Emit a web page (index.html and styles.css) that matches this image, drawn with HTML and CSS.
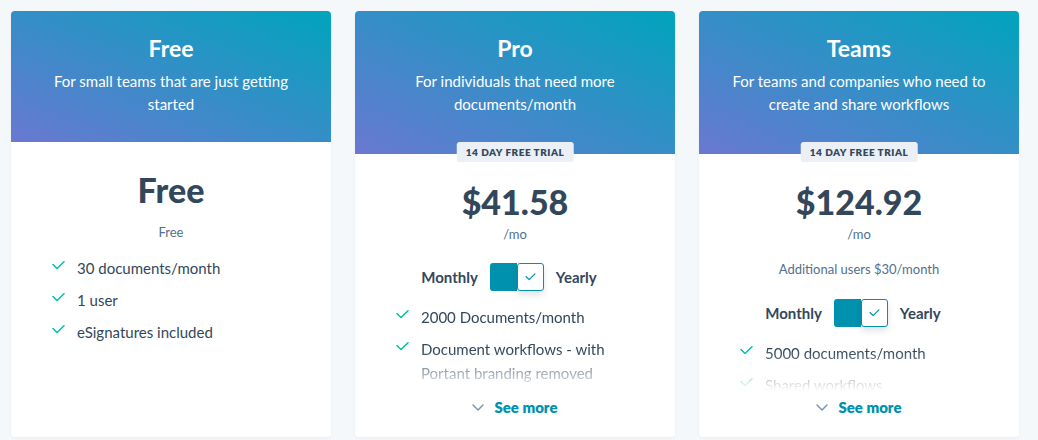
FILE: index.html
```html
<!DOCTYPE html>
<html lang="en">
<head>
<meta charset="utf-8">
<title>Pricing</title>
<link rel="stylesheet" href="styles.css">
</head>
<body>
<div class="plans">
  <div class="card card-free">
    <div class="card-head">
      <h2 class="plan-name">Free</h2>
      <p class="plan-desc">For small teams that are just getting started</p>
    </div>
    <div class="card-body">
      <div class="price">Free</div>
      <div class="price-sub">Free</div>
      <ul class="features">
        <li class="feature"><svg class="check" viewBox="0 0 13 9"><polyline points="1,3.5 5,7.5 12,0.8"/></svg><span>30 documents/month</span></li>
        <li class="feature"><svg class="check" viewBox="0 0 13 9"><polyline points="1,3.5 5,7.5 12,0.8"/></svg><span>1 user</span></li>
        <li class="feature"><svg class="check" viewBox="0 0 13 9"><polyline points="1,3.5 5,7.5 12,0.8"/></svg><span>eSignatures included</span></li>
      </ul>
    </div>
  </div>

  <div class="card">
    <div class="card-head has-badge">
      <h2 class="plan-name">Pro</h2>
      <p class="plan-desc">For individuals that need more documents/month</p>
      <span class="badge">14 DAY FREE TRIAL</span>
    </div>
    <div class="card-body">
      <div class="price">$41.58</div>
      <div class="price-sub">/mo</div>
      <div class="billing">
        <span class="billing-label">Monthly</span>
        <span class="toggle"><span class="toggle-fill"></span><span class="toggle-knob"><svg viewBox="0 0 12 9"><polyline points="1,4 4.5,7.5 11,1"/></svg></span></span>
        <span class="billing-label">Yearly</span>
      </div>
      <ul class="features faded">
        <li class="feature"><svg class="check" viewBox="0 0 13 9"><polyline points="1,3.5 5,7.5 12,0.8"/></svg><span>2000 Documents/month</span></li>
        <li class="feature"><svg class="check" viewBox="0 0 13 9"><polyline points="1,3.5 5,7.5 12,0.8"/></svg><span>Document workflows - with Portant branding removed</span></li>
      </ul>
      <div class="see-more"><svg class="chevron" viewBox="0 0 12 7"><polyline points="1,1 6,6 11,1"/></svg><span>See more</span></div>
    </div>
  </div>

  <div class="card">
    <div class="card-head has-badge">
      <h2 class="plan-name">Teams</h2>
      <p class="plan-desc">For teams and companies who need to create and share workflows</p>
      <span class="badge">14 DAY FREE TRIAL</span>
    </div>
    <div class="card-body">
      <div class="price">$124.92</div>
      <div class="price-sub">/mo</div>
      <div class="extra">Additional users $30/month</div>
      <div class="billing">
        <span class="billing-label">Monthly</span>
        <span class="toggle"><span class="toggle-fill"></span><span class="toggle-knob"><svg viewBox="0 0 12 9"><polyline points="1,4 4.5,7.5 11,1"/></svg></span></span>
        <span class="billing-label">Yearly</span>
      </div>
      <ul class="features faded">
        <li class="feature"><svg class="check" viewBox="0 0 13 9"><polyline points="1,3.5 5,7.5 12,0.8"/></svg><span>5000 documents/month</span></li>
        <li class="feature"><svg class="check" viewBox="0 0 13 9"><polyline points="1,3.5 5,7.5 12,0.8"/></svg><span>Shared workflows</span></li>
      </ul>
      <div class="see-more"><svg class="chevron" viewBox="0 0 12 7"><polyline points="1,1 6,6 11,1"/></svg><span>See more</span></div>
    </div>
  </div>
</div>
</body>
</html>
```

FILE: styles.css
```css
* { box-sizing: border-box; }

html, body {
  margin: 0;
  padding: 0;
  background: #f5f8fa;
  font-family: "Lato", "Noto Sans", sans-serif;
  color: #33475b;
}

.plans {
  display: grid;
  grid-template-columns: repeat(3, 320px);
  gap: 24px;
  padding: 11px;
}

.card {
  background: #ffffff;
  border-radius: 4px;
  height: 426px;
  display: flex;
  flex-direction: column;
  box-shadow: 0 1px 3px rgba(45, 62, 80, 0.06);
}

.card-head {
  position: relative;
  background: linear-gradient(to top right, #6a78d1, #00a4bd);
  border-radius: 4px 4px 0 0;
  padding: 24px 20px 26px;
  text-align: center;
  color: #ffffff;
}

.card-head.has-badge {
  padding-bottom: 38px;
}

.plan-name {
  margin: 0;
  font-size: 23px;
  line-height: 26px;
  font-weight: 700;
}

.plan-desc {
  margin: 9px 0 0;
  font-size: 15px;
  line-height: 23px;
  font-weight: 400;
}

.badge {
  position: absolute;
  left: 50%;
  bottom: -8px;
  transform: translateX(-50%);
  height: 20px;
  line-height: 20px;
  padding: 0 9px;
  border-radius: 3px;
  background: #eaf0f6;
  color: #33475b;
  font-size: 10px;
  font-weight: 800;
  letter-spacing: 0.5px;
  white-space: nowrap;
}

.card-body {
  flex: 1;
  min-height: 0;
  display: flex;
  flex-direction: column;
  padding: 26px 0 18px;
}

.price {
  text-align: center;
  font-size: 34px;
  line-height: 44px;
  font-weight: 900;
  color: #33475b;
}

.price-sub {
  text-align: center;
  font-size: 13px;
  line-height: 20px;
  color: #516f90;
}

.card-free .price-sub {
  margin-top: 10px;
}

.extra {
  margin-top: 14px;
  text-align: center;
  font-size: 13px;
  line-height: 22px;
  color: #516f90;
}

.billing {
  margin-top: 19px;
  display: flex;
  justify-content: center;
  align-items: center;
  gap: 12px;
  height: 28px;
  padding-right: 12px;
}

.billing-label {
  font-size: 15px;
  font-weight: 700;
  color: #33475b;
}

.toggle {
  display: flex;
  width: 54px;
  height: 28px;
}

.toggle-fill {
  flex: 1;
  background: #0091ae;
  border-radius: 3px 0 0 3px;
}

.toggle-knob {
  width: 27px;
  height: 28px;
  background: #ffffff;
  border: 1px solid #0091ae;
  border-radius: 3px;
  display: flex;
  align-items: center;
  justify-content: center;
  box-shadow: 0 4px 6px rgba(45, 62, 80, 0.14);
}

.toggle-knob svg {
  width: 11px;
  height: 8px;
  fill: none;
  stroke: #0091ae;
  stroke-width: 1.4;
  stroke-linecap: round;
  stroke-linejoin: round;
}

.features {
  list-style: none;
  margin: 14px 0 0;
  padding: 0 20px 0 41px;
  display: flex;
  flex-direction: column;
  gap: 8px;
}

.features.faded {
  flex: 1;
  min-height: 0;
  overflow: hidden;
  -webkit-mask-image: linear-gradient(to bottom, #000 calc(100% - 40px), transparent 100%);
  mask-image: linear-gradient(to bottom, #000 calc(100% - 40px), transparent 100%);
}

.feature {
  display: flex;
  align-items: flex-start;
  gap: 12px;
  font-size: 15px;
  line-height: 24px;
  color: #33475b;
}

.check {
  flex: none;
  width: 13px;
  height: 9px;
  margin-top: 5px;
  fill: none;
  stroke: #00bda5;
  stroke-width: 1.5;
  stroke-linecap: round;
  stroke-linejoin: round;
}

.see-more {
  margin-top: 4px;
  display: flex;
  justify-content: center;
  align-items: center;
  gap: 10px;
  height: 24px;
  font-size: 15px;
  font-weight: 800;
  color: #0091ae;
}

.chevron {
  width: 12px;
  height: 7px;
  fill: none;
  stroke: #7c98b6;
  stroke-width: 1.5;
  stroke-linecap: round;
  stroke-linejoin: round;
}
```
